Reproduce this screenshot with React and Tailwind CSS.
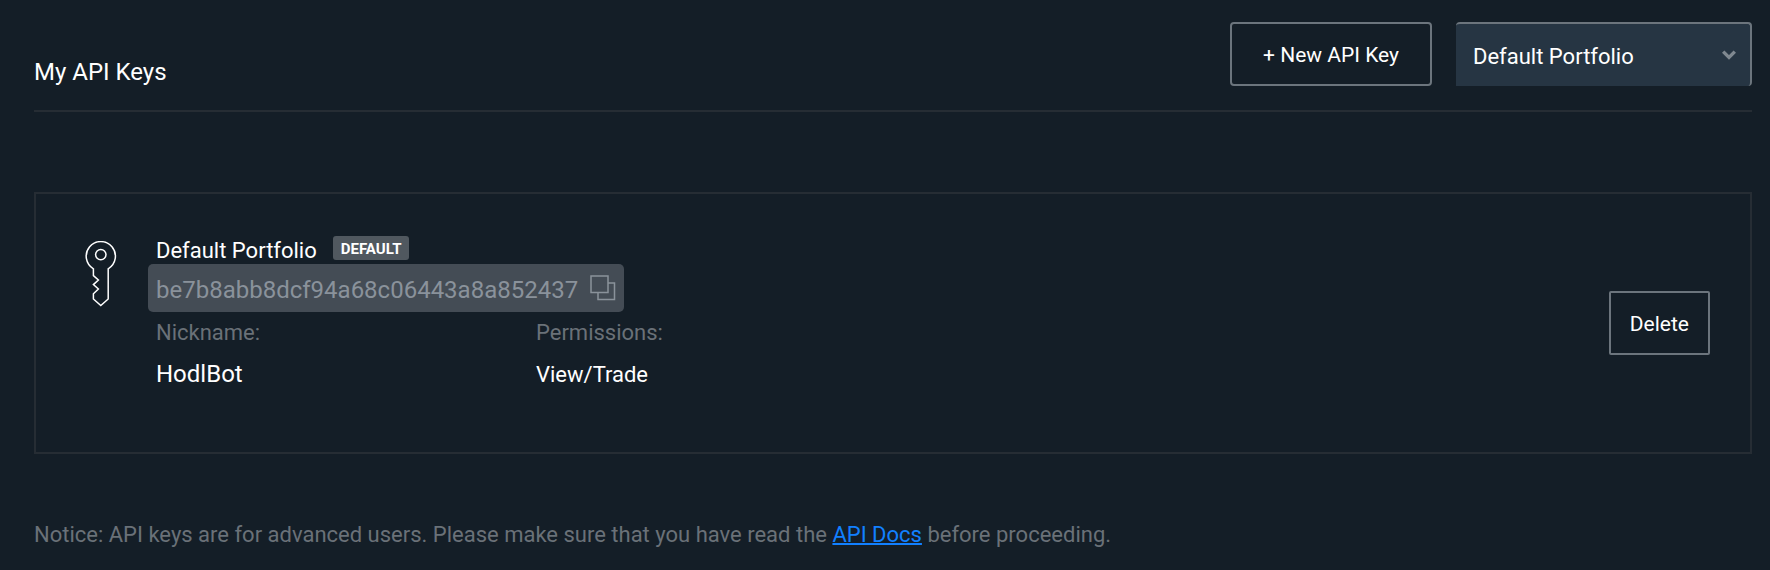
import React, { useState } from "react";

const apiKeys = [
  {
    id: "be7b8abb8dcf94a68c06443a8a852437",
    portfolio: "Default Portfolio",
    isDefault: true,
    nickname: "HodlBot",
    permissions: "View/Trade",
  },
];

const portfolios = ["Default Portfolio"];

function KeyIcon({ className = "" }) {
  return (
    <svg viewBox="0 0 32 66" className={className} fill="none" stroke="currentColor" strokeWidth="1.5" aria-hidden="true">
      <path d="M8.4 27.8A14.6 14.6 0 1 1 23.2 27.8V58L15.8 64.6L8.4 58V52.8L13.4 48L8.4 43.6L13.4 39L8.4 34.6Z" />
      <circle cx="15.8" cy="13.6" r="5.2" />
    </svg>
  );
}

function CopyIcon({ className = "" }) {
  return (
    <svg viewBox="0 0 26 26" className={className} fill="none" stroke="currentColor" strokeWidth="1.5" aria-hidden="true">
      <path d="M1 1H18V17.5H1Z" />
      <path d="M18 8H24.5V24.5H8V17.5" />
    </svg>
  );
}

function Chevron({ className = "" }) {
  return (
    <svg viewBox="0 0 14 10" className={className} fill="none" stroke="currentColor" strokeWidth="3.4" aria-hidden="true">
      <path d="M1.2 1.6L7 7.4L12.8 1.6" />
    </svg>
  );
}

function OutlineButton({ children, className = "", ...props }) {
  return (
    <button
      type="button"
      className={`h-16 shrink-0 border-2 border-[#6c757d] pt-[3px] text-[21px] text-white hover:border-[#9aa3ab] ${className}`}
      {...props}
    >
      {children}
    </button>
  );
}

function ApiKeyCard({ apiKey, onDelete }) {
  const copyKey = () => navigator.clipboard?.writeText(apiKey.id);

  return (
    <li className="flex items-center border-2 border-[#262d34] py-[42px] pr-10 pl-12">
      <KeyIcon className="mt-[5px] h-[66px] w-[34px] shrink-0 self-start text-white" />

      <div className="ml-[30px] flex flex-1 flex-col items-start pb-[14px]">
        {/* Portfolio name + badge */}
        <div className="flex h-7 items-start gap-4 pl-2">
          <h2 className="text-[22px] leading-[30px] text-white">{apiKey.portfolio}</h2>
          {apiKey.isDefault && (
            <span className="h-6 rounded-[3px] bg-[#50585f] px-2 text-[15px] leading-[26px] font-bold text-white">
              DEFAULT
            </span>
          )}
        </div>

        {/* Public key */}
        <div className="flex h-12 items-center gap-3 rounded-[5px] bg-[#444c55] px-2 text-[#8a929b]">
          <code className="pt-1 font-[Roboto,sans-serif] text-2xl">{apiKey.id}</code>
          <button type="button" onClick={copyKey} aria-label="Copy API key">
            <CopyIcon className="size-[26px]" />
          </button>
        </div>

        <dl className="grid grid-cols-[380px_auto] pl-2 text-[22px] text-white">
          <div>
            <dt className="leading-[42px] text-[#6a7178]">Nickname:</dt>
            <dd className="text-2xl leading-10">{apiKey.nickname}</dd>
          </div>
          <div>
            <dt className="leading-[42px] text-[#6a7178]">Permissions:</dt>
            <dd className="leading-[42px]">{apiKey.permissions}</dd>
          </div>
        </dl>
      </div>

      <OutlineButton className="rounded-[2px] px-[19px]" onClick={() => onDelete(apiKey.id)}>
        Delete
      </OutlineButton>
    </li>
  );
}

export default function App() {
  const [keys, setKeys] = useState(apiKeys);
  const [portfolio, setPortfolio] = useState(portfolios[0]);

  return (
    <main className="min-h-screen bg-[#141e27] pt-[22px] pr-[18px] pb-3 pl-[34px] font-[Roboto,sans-serif]">
      {/* Header */}
      <header className="flex items-center border-b-2 border-[#262d34] pb-6">
        <h1 className="mr-auto self-end text-2xl leading-7 text-white">My API Keys</h1>
        <OutlineButton className="rounded-[4px] px-[31px]">+ New API Key</OutlineButton>
        <div className="relative ml-6 w-[296px]">
          <select
            aria-label="Portfolio"
            value={portfolio}
            onChange={(e) => setPortfolio(e.target.value)}
            className="h-16 w-full appearance-none rounded-t-[4px] rounded-br-[4px] border-t-2 border-r-2 border-[#6c757d] bg-[#263543] pt-[2px] pr-12 pl-[17px] text-[22px] text-white"
          >
            {portfolios.map((name) => (
              <option key={name}>{name}</option>
            ))}
          </select>
          <Chevron className="pointer-events-none absolute top-7 right-4 h-[10px] w-[14px] text-[#7f8890]" />
        </div>
      </header>

      <ul className="mt-20">
        {keys.map((apiKey) => (
          <ApiKeyCard
            key={apiKey.id}
            apiKey={apiKey}
            onDelete={(id) => setKeys(keys.filter((k) => k.id !== id))}
          />
        ))}
      </ul>

      <p className="mt-16 text-[22px] leading-[34px] text-[#6a7178]">
        Notice: API keys are for advanced users. Please make sure that you have read the{" "}
        <a href="#docs" className="text-[#1280ff] underline decoration-2">
          API Docs
        </a>{" "}
        before proceeding.
      </p>
    </main>
  );
}
